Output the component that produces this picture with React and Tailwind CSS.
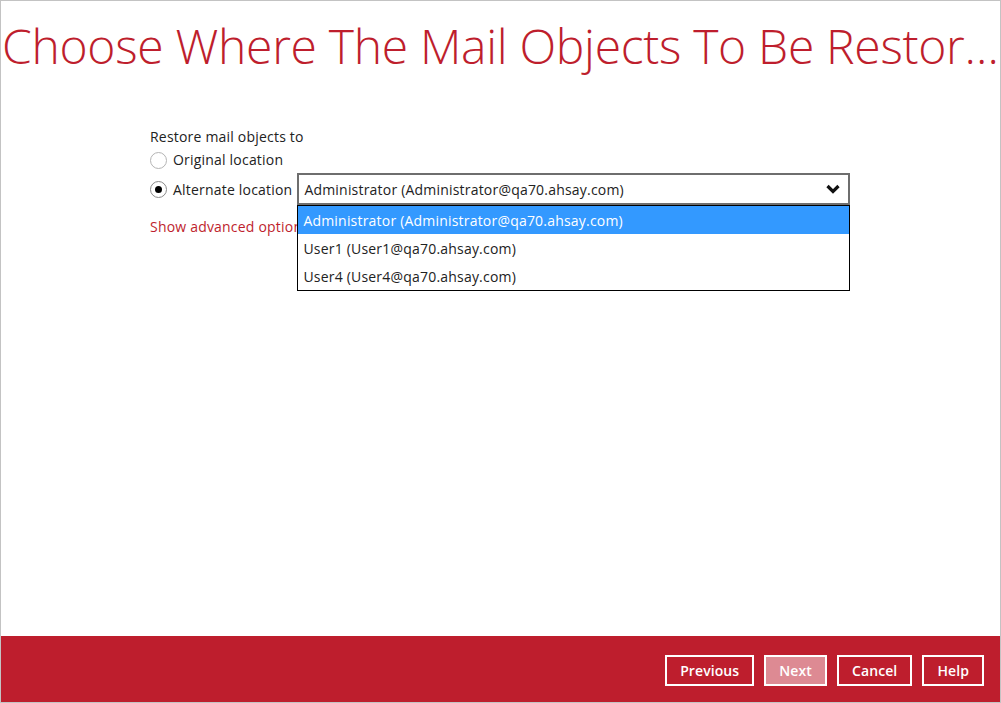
import React, { useState } from 'react';

const users = [
  'Administrator (Administrator@qa70.ahsay.com)',
  'User1 (User1@qa70.ahsay.com)',
  'User4 (User4@qa70.ahsay.com)',
];

const Radio = ({ checked, label, onClick }) => (
  <button onClick={onClick} className="flex items-center gap-[6px] text-left">
    <span
      className={`flex h-[17px] w-[17px] items-center justify-center rounded-full border bg-white ${
        checked ? 'border-[#8a8a8a]' : 'border-[#b4b4b4]'
      }`}
    >
      {checked && <span className="h-[7px] w-[7px] rounded-full bg-black" />}
    </span>
    <span>{label}</span>
  </button>
);

const FooterButton = ({ children, disabled }) => (
  <button
    disabled={disabled}
    className={`h-[31px] border-2 border-white px-[13px] text-[14px] font-semibold tracking-[0.1px] text-white ${
      disabled ? 'bg-[#dd8a93] text-[#fbeef0]' : 'bg-[#be1e2d]'
    }`}
  >
    {children}
  </button>
);

const App = () => {
  const [target, setTarget] = useState('alternate');
  const [selected, setSelected] = useState(0);

  return (
    <div
      className="flex h-[703px] w-[1001px] flex-col border border-[#c3c3c3] bg-white text-[14px] tracking-[0.2px] text-[#222]"
      style={{ fontFamily: '"Open Sans", "Liberation Sans", sans-serif' }}
    >
      <h1 className="truncate pl-[1px] pt-[13px] text-[48px] font-light leading-[64px] tracking-[-0.3px] text-[#be1e2d]">
        Choose Where The Mail Objects To Be Restored
      </h1>

      <div className="flex-1 pl-[149px] pt-[49px]">
        <div className="leading-[20px]">Restore mail objects to</div>
        <div className="mt-[3px] leading-[20px]">
          <Radio
            checked={target === 'original'}
            label="Original location"
            onClick={() => setTarget('original')}
          />
        </div>
        <div className="relative mt-[3px] flex items-center gap-[5px]">
          <Radio
            checked={target === 'alternate'}
            label="Alternate location"
            onClick={() => setTarget('alternate')}
          />
          <div className="relative">
            <div className="flex h-[32px] w-[553px] items-center justify-between border-2 border-[#6e6e6e] bg-white pl-[5px] pr-[8px]">
              <span>{users[selected]}</span>
              <svg width="14" height="10" viewBox="0 0 14 10">
                <path d="M1.5 2 L7 7.5 L12.5 2" fill="none" stroke="#111" strokeWidth="3.2" />
              </svg>
            </div>
            <ul className="absolute left-0 top-[32px] z-10 w-[553px] border border-black bg-white">
              {users.map((u, i) => (
                <li
                  key={u}
                  onClick={() => setSelected(i)}
                  className={`flex h-[28px] items-center pl-[5px] ${
                    i === selected ? 'bg-[#3399ff] text-white' : ''
                  }`}
                >
                  {u}
                </li>
              ))}
            </ul>
          </div>
        </div>
        <div className="mt-[11px] text-[#be1e2d]">Show advanced option</div>
      </div>

      <div className="flex h-[66px] items-center justify-end gap-[10px] bg-[#be1e2d] pr-[16px] pt-[3px]">
        <FooterButton>Previous</FooterButton>
        <FooterButton disabled>Next</FooterButton>
        <FooterButton>Cancel</FooterButton>
        <FooterButton>Help</FooterButton>
      </div>
    </div>
  );
};

export default App;
